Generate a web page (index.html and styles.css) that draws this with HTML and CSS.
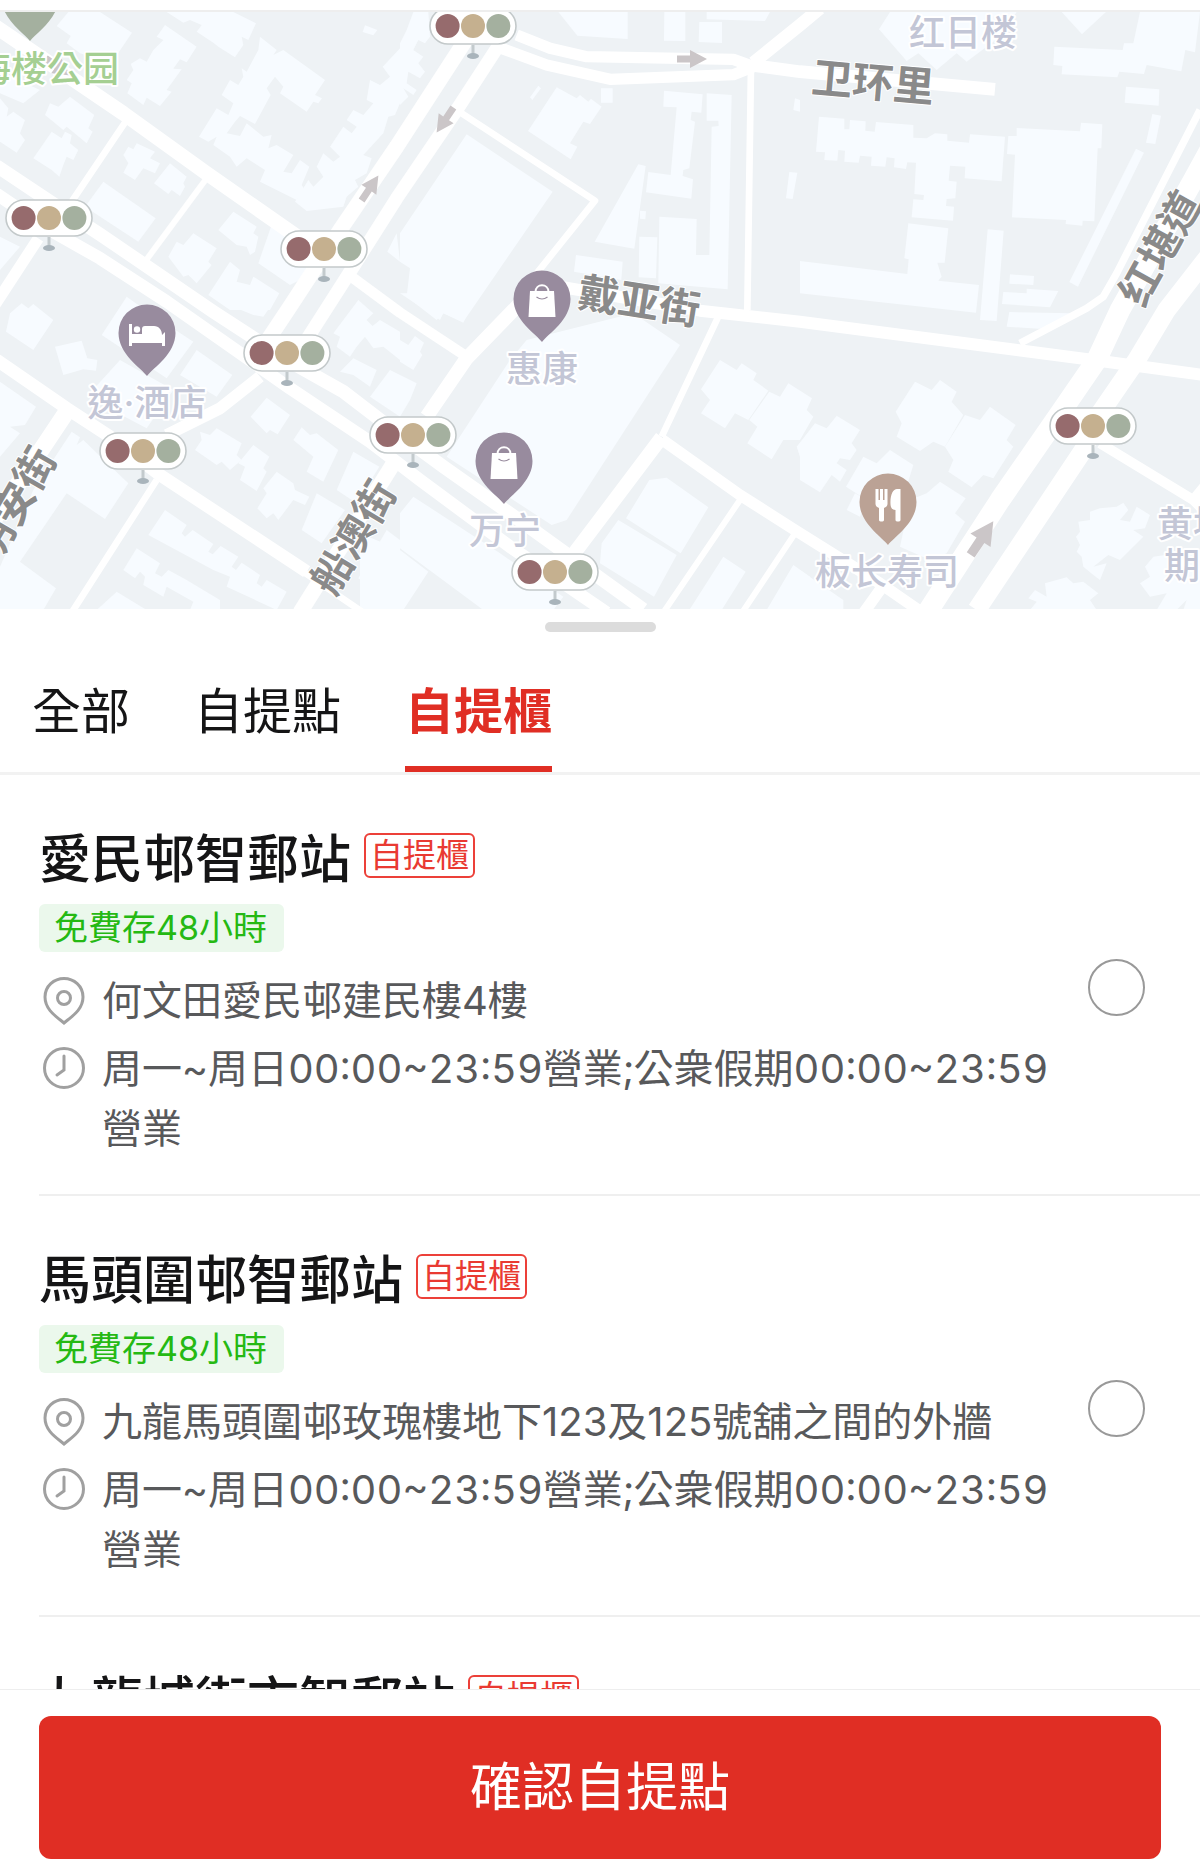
FILE: index.html
```html
<!DOCTYPE html>
<html lang="zh-Hant">
<head>
<meta charset="utf-8">
<meta name="viewport" content="width=device-width, initial-scale=1">
<title>自提點</title>
<link rel="stylesheet" href="styles.css">
</head>
<body>
<main class="page">
  <div class="map">
    <svg class="map-canvas" viewBox="0 12 1200 597" role="img" aria-label="地圖">
      <defs>
        <g id="light">
          <path d="M0 19V29" stroke="#c3cacd" stroke-width="3"/>
          <ellipse cx="0" cy="30" rx="6" ry="3" fill="#a9b4bb"/>
          <rect x="-43" y="-18" width="86" height="36" rx="18" fill="#fff" stroke="#c3c9ca" stroke-width="1.6"/>
          <circle cx="-25.4" r="12" fill="#966b6d"/>
          <circle r="12" fill="#c5b08f"/>
          <circle cx="25.4" r="12" fill="#a4b09f"/>
        </g>
        <path id="pin" d="M0 0C-6 -8 -28.5 -22 -28.5 -43A28.5 28.5 0 0 1 28.5 -43C28.5 -22 6 -8 0 0Z"/>
        <g id="shop">
          <use href="#pin" fill="#988b9e"/>
          <path d="M-12 -51H12L13.5 -25H-13.5Z" fill="#fff"/>
          <path d="M-6.5 -50C-6.5 -59 6.5 -59 6.5 -50" fill="none" stroke="#fff" stroke-width="2"/>
          <path d="M-5.500 -45Q0 -41 5.500 -45" fill="none" stroke="#988b9e" stroke-width="1.2"/>
        </g>
        <path id="arrow" d="M-15 -3.500H-2V-9L15 0L-2 9V3.500H-15Z"/>
      </defs>
      <rect y="12" width="1200" height="597" fill="#eef2f5"/>

      <g transform="scale(.33333)">
        <g class="block">
          <path d="M205 36H300L396 98 335 188 240 160 200 130 212 108 170 78Z"/>
          <path d="M495 75L590 140 560 187 540 178 520 206 545 208 500 270 515 275 480 318 440 293 430 315 382 280 395 250 380 240 400 210 392 192 420 175 440 185 460 150 490 120 470 110Z"/>
          <path d="M500 36H700L768 70 745 120 725 110 730 135 705 172 655 140 640 128 590 95 605 75 570 60 550 68Z"/>
          <path d="M780 110L830 150 820 165 850 150 975 240 945 285 966 295 955 310 940 305 920 335 840 280 850 260 825 230 800 265 812 285 765 372 720 348 705 365 680 400 720 408 740 370 790 410 815 405 805 445 830 435 880 465 850 515 875 520 900 480 928 500 905 555 915 570 890 600 780 545 795 510 740 475 710 500 690 470 640 435 650 410 625 425 597 410 650 325 685 345 700 310 665 285 690 240 715 255 730 230 725 205 740 215 775 150Z"/>
          <path d="M1200 145L1148 200 1170 230 1140 255 1110 240 1100 300 1120 310 1090 345 1060 330 1040 360 1070 380 1055 400 1030 380 990 440 1020 470 1000 485 970 460 950 500 970 530 940 560 925 540 885 605 920 633 1030 620 1040 590 1075 560 1065 540 1100 520 1115 475 1090 465 1150 400 1165 350 1185 345 1200 310Z"/>
          <path d="M210 290L283 345 265 385 278 395 260 430 200 380 190 390 135 345 150 310 175 320Z"/>
          <path d="M155 395L185 415 195 395 215 405 210 430 235 450 220 480 200 470 190 495 178 530 155 510 100 475Z"/>
          <path d="M0 295L25 325 20 350 40 335 75 360 60 400 75 420 50 458 0 425Z"/>
          <path d="M370 465L385 440 400 448 410 430 465 455 450 475 480 490 465 520 430 505 405 540 370 518 385 490Z"/>
          <path d="M510 490L560 530 550 550 555 560 540 588 515 570 505 582 462 550Z"/>
          <path d="M310 545L467 655 415 725 255 620Z"/>
          <path d="M700 635L770 680 760 700 775 710 765 755 750 765 740 740 710 735 655 690Z"/>
          <path d="M580 700L650 745 625 785 635 795 590 850 565 825 550 830 505 770 530 725 550 735Z"/>
          <path d="M690 785L720 810 710 845 750 855 760 830 838 880 810 930H690L625 885Z"/>
          <path d="M820 660L880 700 935 780 900 840 870 855 775 790Z"/>
          <path d="M0 710L60 740 0 810Z"/>
          <path d="M1190 700L1162 755 1200 785Z"/>
          <path d="M0 215L120 270 70 310 0 280Z"/>
          <path d="M1095 76L1132 90 1120 106 1088 96Z"/>
        </g>
        <g class="block" transform="translate(1200)">
          <path d="M40 36H85L90 110 75 130 55 120 40 150 70 170 55 190 75 215 60 235 25 215 20 250 50 270 40 285 10 265 25 290 0 315V130L20 90Z"/>
          <path d="M475 36H683V117L532 107Z"/>
          <path d="M793 36H856V123L792 122ZM920 36H1110L1095 63 920 58ZM898 66H966V129L896 126Z"/>
          <path d="M200 403L458 575 190 965 130 940 110 960 20 890 30 805 0 785V700Z"/>
          <path d="M470 262L530 295 540 285 565 305 573 296 605 320 570 372 550 365 510 430 532 440 512 478 384 393Z"/>
          <path d="M415 257L423 265 397 300 390 292ZM603 265H638V308H603Z"/>
          <path d="M792 272L908 283 904 338 875 335 872 360 885 365 868 505 850 510 848 528 879 538 874 596 738 577 745 516 812 525 830 322 790 320Z"/>
          <path d="M920 280L995 285 983 868 775 850 778 650 890 657 888 765H928L935 380 956 378 955 362H920Z"/>
          <path d="M715 493L737 498 703 746 584 725ZM720 632L738 634 736 658 720 656ZM718 710L772 712 768 835 716 832ZM528 765L668 785 664 840 522 815ZM1168 516L1192 518 1178 597 1158 595ZM1185 295L1200 300V335L1180 330Z"/>
        </g>
        <g class="block" transform="translate(2400)">
          <path d="M270 36H650L600 110 500 185 470 160 410 210 355 160 320 183 237 88Z"/>
          <path d="M785 36H918L846 103Z"/>
          <path d="M1020 36H1200L1185 157 1156 150 1144 214 1040 195 1032 222 958 215 952 232 785 223 787 198 760 195 763 140 968 150 972 130H1000Z"/>
          <path d="M978 260L1078 268 1076 317 974 308ZM1057 342L1083 347 1066 432 1038 428ZM1008 446L1032 458 834 860 808 846Z"/>
          <path d="M57 350L133 356V388H148L150 360 197 364 196 392 224 395 228 366 340 375V413L380 415 405 400 442 403V422L507 428 510 403 615 410 605 544 494 535 496 500 450 497 446 542 470 545 466 595 440 597 438 618 462 620 459 662 335 652 340 598 370 600 372 585 343 582 348 488 322 487 318 507 282 502 284 475 260 472 256 500 213 497 215 470 180 467 176 488 133 485 135 452 115 450 112 482 73 480 75 457 48 455Z"/>
          <path d="M650 384L840 394 843 368 907 373 904 445H893L883 664 848 662 847 677 797 672 798 660 636 652 645 464 621 462 625 408H650Z"/>
          <path d="M325 670L445 685 434 788H412L425 830 415 842 537 855 528 938 0 880V783L322 822 326 778 313 775Z"/>
          <path d="M563 688L611 692 590 963 540 960ZM630 823L702 828 700 855 628 851ZM610 876L680 880V866L775 873 750 922 606 912ZM628 936L810 940 740 988 620 980Z"/>
        </g>
        <g class="block" transform="translate(0 900)">
          <path d="M65 10L85 25 100 12 160 60 100 150 18 95 30 40ZM245 122L262 175 292 180 288 212 250 208 190 225 165 140Z"/>
          <path d="M380 -10L450 40 580 125 500 235 305 105ZM590 150L697 225 650 290 540 225ZM360 180L520 270 440 385 260 290Z"/>
          <path d="M650 0H825L790 50 760 45Z"/>
          <path d="M0 245L108 320 75 375 30 380 60 400 0 470Z"/>
          <path d="M215 395L240 412 230 435 250 420 385 550 315 657 200 580 60 785 168 865 130 930H0V800L100 570Z"/>
          <path d="M800 293L870 345 833 403 810 390 800 400 752 350Z"/>
          <path d="M650 385L725 430 710 465 725 480 690 510 665 485 650 495 585 450 605 420 600 395 630 405Z"/>
          <path d="M760 435L808 470 790 505 800 515 770 573 720 540 735 500 715 490Z"/>
          <path d="M905 382L930 405 950 400 1015 450 970 545 920 515 940 470 880 420Z"/>
          <path d="M830 515L880 550 885 570 928 590 915 615 880 600 835 660 820 640 800 655 772 625 800 580 790 565Z"/>
          <path d="M1060 455L1138 500 1070 610 1010 570ZM950 580L1035 630 965 730 905 690Z"/>
          <path d="M495 630L560 675 545 700 555 710 578 690 640 732 625 755 638 763 662 738 715 770 695 800 708 810 725 788 780 825 770 850 785 860 800 840 860 875 830 930 680 860 690 830 640 810 445 705Z"/>
          <path d="M410 745L480 790 465 820 485 830 505 810 560 840 610 870 660 900V930H570L580 905 500 860 490 890 430 855 435 830 420 815 405 835 370 810ZM350 875L440 930H290Z"/>
          <path d="M1160 690L1200 720V920L1075 835Z"/>
          <path d="M1075 0L1120 40 1100 60 1120 80 1070 140 1050 170 1010 140 1020 110 1000 100ZM1140 60L1200 95V180L1150 140 1120 145 1080 90 1115 80ZM1060 175L1130 210 1110 260 1060 225 1020 215ZM1170 210L1250 250 1230 300 1200 350 1110 290Z"/>
        </g>
        <g class="block" transform="translate(1200 900)">
          <path d="M0 -20H230L190 68 130 40 120 60Z"/>
          <path d="M380 120L700 40 840 135 500 660 455 675 140 470 330 180Z"/>
          <path d="M0 120L25 135 45 108 72 128 60 155 67 165 40 210 0 185Z"/>
          <path d="M960 180L1010 210 1025 190 1070 220 1060 240 1105 272 1045 360 1005 340 975 385 903 340 930 300 903 268Z"/>
          <path d="M1108 275L1140 290 1165 250 1236 295 1220 330 1240 350 1200 420 1150 420 1115 478 1042 430 1072 380 1048 360Z"/>
          <path d="M748 540L800 533 925 622 842 760 678 655ZM655 660L830 765 762 890 600 790 605 730ZM970 770L1037 815 965 930H868ZM1180 795L1230 830 1200 930H1100Z"/>
          <path d="M40 590L300 760 490 890 460 930H250L0 745V640ZM0 750L85 815 10 930H-120V700Z"/>
        </g>
        <g class="block" transform="translate(2400 900)">
          <path d="M345 245L395 270 420 240 470 275 455 305 490 345 435 440 400 425 360 453 290 410 305 370 287 335Z"/>
          <path d="M495 345L540 360 570 320 647 375 620 420 640 440 580 535 550 525 515 562 445 515 460 480 435 440Z"/>
          <path d="M45 370L80 385 110 347 180 390 155 430 170 450 150 480 120 475 110 490 140 510 120 545 95 525 60 577 0 540 0 470 -10 440Z"/>
          <path d="M190 470L230 490 270 450 340 495 320 560 200 600 138 560ZM420 545L497 595 465 640 495 665 440 760 390 780 300 740 330 600 380 580ZM165 580L200 600 180 650 140 630ZM0 810L130 900V930H0Z"/>
          <path d="M870 635L900 625 950 620 970 608 985 630 960 660 990 665 1010 620 1050 645 1035 685 1000 690 1030 710 960 780 925 765 880 800 920 790 900 840 880 825 850 800 845 770 830 755 840 735 828 710 840 695 835 665 870 660Z"/>
          <path d="M735 850L800 832 820 850 850 845 895 880 870 900 890 930H690L710 905 685 895 705 870 740 890Z"/>
          <path d="M1060 770L1200 750V930H1150L1160 900 1130 930H1070L1100 880 1050 890 1020 850 1050 830 1035 800Z"/>
        </g>

        <g class="road">
          <path stroke-width="44" d="M-20 75L370 340 620 520 920 730"/>
          <path stroke-width="32" d="M1040 820L1200 938 1400 1070"/>
          <path stroke-width="40" d="M-10 498L150 605 300 703 640 935 870 1085 1030 1175 1180 1290 1330 1400 1600 1590 1930 1828"/>
          <path stroke-width="38" d="M-10 582L150 690 300 775 500 905 700 1045 870 1165 1110 1325 1260 1440 1530 1640 1820 1838"/>
          <path stroke-width="38" d="M-10 1080L200 1225 330 1310 480 1425 920 1715"/>
          <path stroke-width="20" d="M910 1715L1090 1838M380 360L215 605M470 1440L215 1838"/>
          <path stroke-width="34" d="M115 715L-20 922"/>
          <path stroke-width="18" d="M620 535L435 785"/>
          <path stroke-width="50" d="M200 1235L90 1400-150 1750"/>
          <path stroke-width="36" d="M780 1130L660 1225 500 1305"/>
          <path stroke-width="46" d="M1190 1375L900 1838"/>
          <path stroke-width="46" d="M1410 100L1190 440 1020 690 870 920 790 1040"/>
          <path stroke-width="40" d="M1500 130L1370 330 1190 595 1060 800 900 1050"/>
          <path stroke-width="34" d="M1550 105L1650 145 1760 170 2200 178 2260 200M1490 140L1640 195 1830 238 2200 224 2260 200"/>
          <path stroke-width="38" d="M2250 195L2400 215 2985 268M2260 188L2400 75 2460 25"/>
          <path stroke-width="20" d="M1370 330L1785 602 1610 820M2253 200L2242 930M2155 950L1985 1310"/>
          <path stroke-width="42" d="M1560 910L1400 1075 1280 1250M1985 1312L1700 1690"/>
          <path stroke-width="36" d="M1650 855L2100 932 2400 965 3280 1080 3610 1125"/>
          <path stroke-width="34" d="M1985 1318L2220 1485 2400 1600 2640 1750 2770 1840M2640 1770L2590 1840"/>
          <path stroke-width="18" d="M2220 1500L1985 1845M2385 1600L2225 1840"/>
          <path stroke-width="22" d="M3600 330L3350 820 3310 890 3260 925 3060 1030"/>
          <path stroke-width="62" d="M3640 430L3580 540 3360 930 3290 1080 3180 1240 3000 1500 2780 1840"/>
          <path stroke-width="56" d="M3640 750L3500 930 3410 1080 3300 1240 3250 1350 2930 1830"/>
          <path stroke-width="30" d="M3300 1330L3580 1500 3620 1540M3580 1500L3620 1450"/>
        </g>
      </g>

      <g fill="#cbc6c8">
        <use href="#arrow" transform="translate(58 67) rotate(35)"/>
        <use href="#arrow" transform="translate(692 59)"/>
        <use href="#arrow" transform="translate(445 120) rotate(124)"/>
        <use href="#arrow" transform="translate(370 188) rotate(-56)"/>
        <use href="#arrow" transform="translate(982 538) rotate(-56) scale(1.35)"/>
      </g>

      <g class="street">
        <text transform="translate(873 82) rotate(5)" dy="15">卫环里</text>
        <text transform="translate(639 301) rotate(9)" dy="15">戴亚街</text>
        <text transform="translate(1160 248) rotate(-61)" dy="15">红堪道</text>
        <text transform="translate(353 537) rotate(-59)" dy="15">船澳街</text>
        <text transform="translate(14 504) rotate(-60)" dy="15">明安街</text>
      </g>

      <use href="#pin" x="30" y="41" fill="#a4b09f"/>
      <g transform="translate(147 376)">
        <use href="#pin" fill="#988b9e"/>
        <path fill="#fff" d="M-18 -52H-15V-42H-5V-47C-5 -49 -4 -50 -2 -50H7C12 -50 15 -46 15 -41L18 -44V-30H15V-33H-15V-30H-18Z"/>
        <circle cx="-10" cy="-46.500" r="3.200" fill="#fff"/>
      </g>
      <use href="#shop" x="542" y="342"/>
      <use href="#shop" x="504" y="504"/>
      <g transform="translate(888 545)">
        <use href="#pin" fill="#bba295"/>
        <path fill="#fff" d="M-12.500 -56H-9.500V-45H-8V-56H-5V-45H-3.500V-56H-.5V-41C-.5 -39 -2 -38 -4 -37V-25C-4 -23 -9 -23 -9 -25V-37C-11 -38 -12.500 -39 -12.500 -41ZM12.500 -56V-25C12.500 -23 7.500 -23 7.500 -25V-35C4 -35 2.500 -38 2.500 -41C2 -50 5 -56 9 -56Z"/>
      </g>

      <g class="place">
        <text class="park" x="47" y="82">海楼公园</text>
        <text x="963" y="46">红日楼</text>
        <text x="147" y="416">逸<tspan class="dot">·</tspan>酒店</text>
        <text x="542" y="382">惠康</text>
        <text x="505" y="544">万宁</text>
        <text x="887" y="585">板长寿司</text>
        <text x="1193" y="537">黄埔</text>
        <text x="1182" y="579">期</text>
      </g>

      <use href="#light" x="49" y="218"/>
      <use href="#light" x="324" y="249"/>
      <use href="#light" x="473" y="26"/>
      <use href="#light" x="287" y="353"/>
      <use href="#light" x="143" y="451"/>
      <use href="#light" x="413" y="435"/>
      <use href="#light" x="555" y="572"/>
      <use href="#light" x="1093" y="426"/>
    </svg>
  </div>

  <div class="grip"></div>

  <div class="tabs" role="tablist">
    <button class="tab" type="button" role="tab" aria-selected="false">全部</button>
    <button class="tab" type="button" role="tab" aria-selected="false">自提點</button>
    <button class="tab tab-active" type="button" role="tab" aria-selected="true">自提櫃</button>
  </div>

  <ul class="list">
    <li class="station">
      <div class="info">
        <div class="heading">
          <label class="name" for="station-1">愛民邨智郵站</label>
          <span class="tag">自提櫃</span>
        </div>
        <span class="chip">免費存48小時</span>
        <div class="row">
          <svg class="icon" viewBox="0 0 42 48" aria-hidden="true"><path d="M21 46C14 40 2 33 2 20C2 9 11 1.500 21 1.500S40 9 40 20C40 33 28 40 21 46Z"/><circle cx="21" cy="21" r="6.500"/></svg>
          <p class="text">何文田愛民邨建民樓4樓</p>
        </div>
        <div class="row">
          <svg class="icon" viewBox="0 0 42 48" aria-hidden="true"><circle cx="21" cy="23" r="19.500"/><path d="M21 11V25L14 30"/></svg>
          <p class="text hours">周一~周日00:00~23:59營業;公衆假期00:00~23:59營業</p>
        </div>
      </div>
      <input class="pick" type="radio" name="station" id="station-1">
    </li>
    <li class="station">
      <div class="info">
        <div class="heading">
          <label class="name" for="station-2">馬頭圍邨智郵站</label>
          <span class="tag">自提櫃</span>
        </div>
        <span class="chip">免費存48小時</span>
        <div class="row">
          <svg class="icon" viewBox="0 0 42 48" aria-hidden="true"><path d="M21 46C14 40 2 33 2 20C2 9 11 1.500 21 1.500S40 9 40 20C40 33 28 40 21 46Z"/><circle cx="21" cy="21" r="6.500"/></svg>
          <p class="text">九龍馬頭圍邨玫瑰樓地下123及125號舖之間的外牆</p>
        </div>
        <div class="row">
          <svg class="icon" viewBox="0 0 42 48" aria-hidden="true"><circle cx="21" cy="23" r="19.500"/><path d="M21 11V25L14 30"/></svg>
          <p class="text hours">周一~周日00:00~23:59營業;公衆假期00:00~23:59營業</p>
        </div>
      </div>
      <input class="pick" type="radio" name="station" id="station-2">
    </li>
    <li class="station">
      <div class="info">
        <div class="heading">
          <span class="name">九龍城街市智郵站</span>
          <span class="tag">自提櫃</span>
        </div>
      </div>
    </li>
  </ul>

  <footer class="footer">
    <button class="confirm" type="button">確認自提點</button>
  </footer>
</main>
</body>
</html>
```
FILE: styles.css
```css
* {
  box-sizing: border-box;
}

body {
  margin: 0;
  background: #fff;
  color: #151516;
  font-family: Inter, "Noto Sans CJK TC", sans-serif;
}

button {
  margin: 0;
  border: 0;
  background: none;
  font-family: inherit;
}

.page {
  display: flex;
  flex-direction: column;
  height: 100vh;
}

.map {
  flex: none;
  margin-top: 10px;
  border-top: 2px solid #eee;
}

.map-canvas {
  display: block;
  width: 100%;
}

.block {
  fill: #f7fbff;
}

.road {
  fill: none;
  stroke: #fff;
  stroke-linejoin: round;
}

.street,
.place {
  font-family: "Noto Sans CJK SC", sans-serif;
  font-weight: 500;
  text-anchor: middle;
  paint-order: stroke;
  stroke: #fff;
  stroke-linejoin: round;
}

.street {
  fill: #8a8a8a;
  font-size: 41px;
  font-weight: 700;
  stroke-width: 2px;
}

.place {
  fill: #c3c6d6;
  font-size: 36px;
  stroke-width: 4px;
}

.park {
  fill: #a5cf92;
}

.dot {
  font-family: Inter, sans-serif;
}

.grip {
  flex: none;
  align-self: center;
  width: 111px;
  height: 10px;
  margin-top: 13px;
  border-radius: 5px;
  background: #dcdcdc;
}

.tabs {
  display: flex;
  flex: none;
  gap: 64px;
  padding: 50px 32px 0;
  border-bottom: 3px solid #f2f2f2;
}

.tab {
  padding: 0 0 24px;
  border-bottom: 6px solid transparent;
  color: #151516;
  font-size: 49px;
  line-height: 60px;
}

.tab-active {
  border-color: #e02e24;
  color: #e02e24;
  font-weight: 700;
}

.list {
  flex: 1;
  min-height: 0;
  margin: 0;
  padding: 0 0 0 39px;
  overflow-y: auto;
  scrollbar-width: none;
  list-style: none;
}

.station {
  display: flex;
  align-items: center;
  gap: 16px;
  padding: 41px 55px 35px 0;
  border-bottom: 2px solid #efefef;
}

.info {
  flex: 1;
  padding-top: 14px;
}

.heading {
  display: flex;
  align-items: flex-start;
  gap: 13px;
}

.name {
  font-size: 52px;
  font-weight: 500;
  line-height: 60px;
}

.tag {
  margin-top: 3px;
  padding: 0 4px;
  border: 2px solid #ec4039;
  border-radius: 6px;
  color: #e93a32;
  font-size: 33px;
  line-height: 41px;
}

.chip {
  display: block;
  width: max-content;
  margin: 14px 0 19px;
  padding: 0 17px 0 15px;
  border-radius: 6px;
  background: #ebf8ec;
  color: #25b913;
  font-size: 34px;
  line-height: 48px;
}

.row {
  display: flex;
  gap: 17px;
  margin-top: 8px;
  padding-left: 4px;
}

.icon {
  flex: none;
  width: 42px;
  height: 48px;
  margin-top: 6px;
  fill: none;
  stroke: #a0a0a0;
  stroke-width: 3px;
  stroke-linecap: round;
}

.text {
  margin: 0;
  color: #58595b;
  font-size: 40px;
  line-height: 60px;
}

.hours {
  font-variant-numeric: tabular-nums;
}

.pick {
  flex: none;
  width: 57px;
  height: 57px;
  margin: 0;
  border: 2px solid #999;
  border-radius: 50%;
  appearance: none;
}

.pick:checked {
  border: 16px solid #e02e24;
}

.footer {
  flex: none;
  padding: 26px 39px 11px;
  border-top: 1px solid #eee;
}

.confirm {
  display: block;
  width: 100%;
  padding: 42px 0 41px;
  border-radius: 12px;
  background: #e02e24;
  color: #fff;
  font-size: 52px;
  line-height: 60px;
}
```
